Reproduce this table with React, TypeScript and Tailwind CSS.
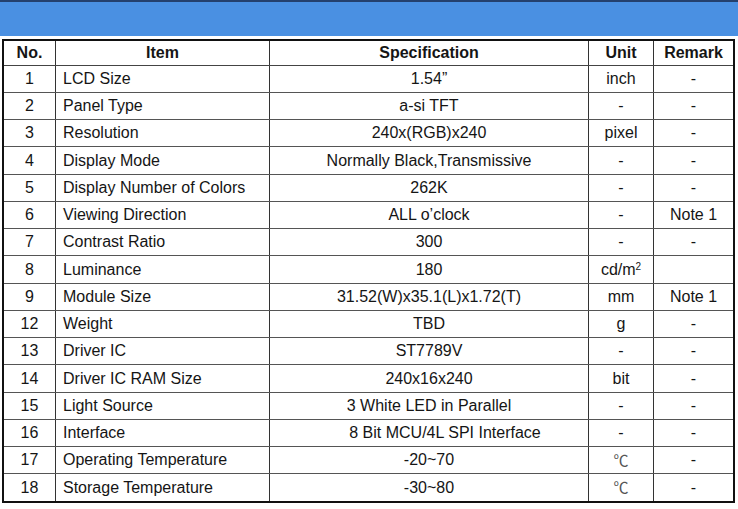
import React from "react";

type Row = {
  no: string;
  item: string;
  spec: React.ReactNode;
  unit: React.ReactNode;
  remark: string;
  tall?: boolean;
  specClass?: string;
};

const celsius = (
  <span className="text-[#555] text-[15px]" style={{ fontFamily: '"Noto Sans CJK SC", "DejaVu Sans", sans-serif' }}>
    ℃
  </span>
);

const ROWS: Row[] = [
  { no: "1", item: "LCD Size", spec: "1.54”", unit: "inch", remark: "-" },
  { no: "2", item: "Panel Type", spec: "a-si TFT", unit: "-", remark: "-" },
  { no: "3", item: "Resolution", spec: "240x(RGB)x240", unit: "pixel", remark: "-" },
  { no: "4", item: "Display Mode", spec: "Normally Black,Transmissive", unit: "-", remark: "-", tall: true },
  { no: "5", item: "Display Number of Colors", spec: "262K", unit: "-", remark: "-" },
  { no: "6", item: "Viewing Direction", spec: "ALL o’clock", unit: "-", remark: "Note 1" },
  { no: "7", item: "Contrast Ratio", spec: "300", unit: "-", remark: "-" },
  {
    no: "8",
    item: "Luminance",
    spec: "180",
    unit: (
      <span>
        cd/m<sup className="text-[10px]">2</sup>
      </span>
    ),
    remark: "",
    tall: true,
  },
  { no: "9", item: "Module Size", spec: "31.52(W)x35.1(L)x1.72(T)", unit: "mm", remark: "Note 1" },
  { no: "12", item: "Weight", spec: "TBD", unit: "g", remark: "-" },
  { no: "13", item: "Driver IC", spec: "ST7789V", unit: "-", remark: "-" },
  { no: "14", item: "Driver IC RAM Size", spec: "240x16x240", unit: "bit", remark: "-", tall: true },
  { no: "15", item: "Light Source", spec: "3 White LED in Parallel", unit: "-", remark: "-" },
  { no: "16", item: "Interface", spec: "8 Bit MCU/4L SPI Interface", unit: "-", remark: "-", specClass: "pl-8" },
  { no: "17", item: "Operating Temperature", spec: "-20~70", unit: celsius, remark: "-" },
  { no: "18", item: "Storage Temperature", spec: "-30~80", unit: celsius, remark: "-" },
];

const COLS = "grid grid-cols-[52px_214px_319px_65px_79px]";
const CELL = "flex items-center border-r border-[#333]";

export default function App() {
  return (
    <div
      className="w-[738px] h-[509px] bg-white text-[16px] text-[#151515] overflow-hidden"
      style={{ fontFamily: '"Liberation Sans", Arial, sans-serif' }}
    >
      {/* Blue title band */}
      <div className="h-[36px] bg-[#4a90e2] border-t-2 border-[#24406e]" />

      <div className="mt-[3px] ml-[2px] w-[733px] border-2 border-[#111]">
        {/* Header */}
        <div className={`${COLS} h-[25px] border-b border-[#444] font-bold`}>
          <div className={`${CELL} justify-center`}>No.</div>
          <div className={`${CELL} justify-center`}>Item</div>
          <div className={`${CELL} justify-center`}>Specification</div>
          <div className={`${CELL} justify-center`}>Unit</div>
          <div className="flex items-center justify-center">Remark</div>
        </div>

        {ROWS.map((r, i) => (
          <div
            key={r.no}
            className={`${COLS} ${r.tall ? "h-[28px]" : "h-[27px]"} ${
              i < ROWS.length - 1 ? "border-b border-[#555]" : ""
            }`}
          >
            <div className={`${CELL} justify-center`}>{r.no}</div>
            <div className={`${CELL} pl-[7px]`}>{r.item}</div>
            <div className={`${CELL} justify-center ${r.specClass ?? ""}`}>{r.spec}</div>
            <div className={`${CELL} justify-center`}>{r.unit}</div>
            <div className="flex items-center justify-center">{r.remark}</div>
          </div>
        ))}
      </div>
    </div>
  );
}
